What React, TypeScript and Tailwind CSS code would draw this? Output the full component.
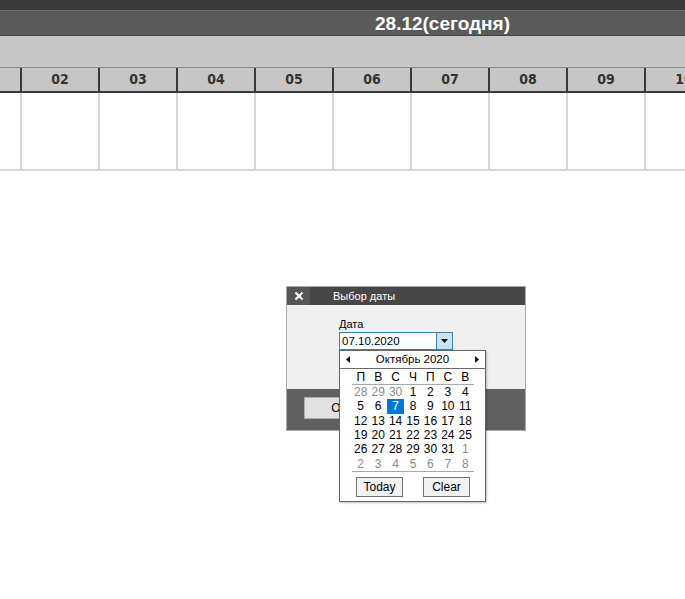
import React from "react";

const cols = ["02", "03", "04", "05", "06", "07", "08", "09", "10"];

type D = { n: number; grey?: boolean; sel?: boolean };
const rows: D[][] = [
  [{ n: 28, grey: true }, { n: 29, grey: true }, { n: 30, grey: true }, { n: 1 }, { n: 2 }, { n: 3 }, { n: 4 }],
  [{ n: 5 }, { n: 6 }, { n: 7, sel: true }, { n: 8 }, { n: 9 }, { n: 10 }, { n: 11 }],
  [{ n: 12 }, { n: 13 }, { n: 14 }, { n: 15 }, { n: 16 }, { n: 17 }, { n: 18 }],
  [{ n: 19 }, { n: 20 }, { n: 21 }, { n: 22 }, { n: 23 }, { n: 24 }, { n: 25 }],
  [{ n: 26 }, { n: 27 }, { n: 28 }, { n: 29 }, { n: 30 }, { n: 31 }, { n: 1, grey: true }],
  [2, 3, 4, 5, 6, 7, 8].map((n) => ({ n, grey: true })),
];

const dayNames = ["П", "В", "С", "Ч", "П", "С", "В"];

export default function App() {
  return (
    <div className="relative w-[685px] h-[599px] overflow-hidden bg-white font-['Liberation_Sans',sans-serif]">
      {/* top bands */}
      <div className="h-[10px] bg-[#3a3a3a]" />
      <div className="h-[26px] bg-[#5a5a5a] border-t border-t-[#6e6e6e] border-b border-b-[#444444] flex items-center pl-[375px]">
        <span className="text-white font-bold text-[19px] leading-none">28.12(сегодня)</span>
      </div>
      <div className="h-[31px] bg-[#c6c6c6]" />
      {/* header row */}
      <div className="flex h-[26px] bg-[#c6c6c6] border-t border-t-[#8c8c8c] border-b-2 border-b-[#3a3a3a] overflow-hidden">
        <div className="w-[20px] shrink-0" />
        {cols.map((c) => (
          <div
            key={c}
            className="w-[78px] shrink-0 border-l-2 border-l-[#3a3a3a] flex items-center justify-center font-['Liberation_Sans_Narrow','DejaVu_Sans',sans-serif] font-stretch-condensed font-bold text-[14px] text-[#333333]"
          >
            {c}
          </div>
        ))}
      </div>
      {/* body row */}
      <div className="flex h-[78px] border-b-2 border-b-[#d6d6d6] overflow-hidden">
        <div className="w-[20px] shrink-0" />
        {cols.map((c) => (
          <div key={c} className="w-[78px] shrink-0 border-l-2 border-l-[#d6d6d6]" />
        ))}
      </div>

      {/* dialog */}
      <div className="absolute left-[286px] top-[286px] w-[240px] h-[145px] border border-[#a8a8a8] flex flex-col">
        <div className="h-[18px] bg-[#474747] flex items-center shrink-0">
          <div className="w-[23px] h-full bg-[#565656] flex items-center justify-center">
            <svg width="10" height="10" viewBox="0 0 10 10">
              <path d="M1.5 1.5 L8.5 8.5 M8.5 1.5 L1.5 8.5" stroke="white" strokeWidth="2" />
            </svg>
          </div>
          <span className="ml-[23px] text-white text-[11px] leading-none">Выбор даты</span>
        </div>
        <div className="h-[84px] bg-[#f0f0f0] pl-[52px] pt-[12px] shrink-0">
          <div className="text-[11px] leading-[14px] text-black">Дата</div>
          <div className="mt-[1px] w-[114px] h-[18px] border border-[#3c7fb1] bg-white flex">
            <div className="flex-1 pl-[2px] text-[11.5px] leading-[16px] text-black">07.10.2020</div>
            <div className="w-[16px] h-full bg-[#c9e2f6] border-l border-l-[#3c7fb1] flex items-center justify-center">
              <svg width="7" height="4" viewBox="0 0 7 4">
                <path d="M0 0 H7 L3.5 4 Z" fill="#111" />
              </svg>
            </div>
          </div>
        </div>
        <div className="flex-1 bg-[#606060] pl-[17px] pt-[8px]">
          <div className="w-[72px] h-[22px] bg-[#e1e1e1] border border-[#adadad] flex items-center justify-center text-[12px] text-black">
            OK
          </div>
        </div>
      </div>

      {/* calendar popup */}
      <div className="absolute left-[339px] top-[350px] w-[147px] h-[152px] bg-white border border-[#646464] flex flex-col items-center shadow-[1px_1px_2px_rgba(0,0,0,0.25)]">
        <div className="w-full h-[18px] border-b border-b-[#6a6a6a] flex items-center justify-between px-[6px] shrink-0">
          <svg width="4" height="7" viewBox="0 0 4 7">
            <path d="M4 0 V7 L0 3.5 Z" fill="#111" />
          </svg>
          <span className="text-[11.5px] leading-none text-black">Октябрь 2020</span>
          <svg width="4" height="7" viewBox="0 0 4 7">
            <path d="M0 0 V7 L4 3.5 Z" fill="#111" />
          </svg>
        </div>
        <div className="w-[122px] ml-[1px] h-[16px] border-b border-b-[#a8a8a8] grid grid-cols-7 shrink-0">
          {dayNames.map((d, i) => (
            <div key={i} className="flex items-center justify-center text-[12px] leading-none text-black">
              {d}
            </div>
          ))}
        </div>
        <div className="w-[122px] ml-[1px] h-[86px] grid grid-cols-7 grid-rows-6 shrink-0">
          {rows.flat().map((d, i) => (
            <div
              key={i}
              className={
                d.sel
                  ? "flex items-center justify-center text-[12px] leading-none bg-[#0078d7] text-white"
                  : d.grey
                  ? "flex items-center justify-center text-[12px] leading-none text-[#8a8a8a]"
                  : "flex items-center justify-center text-[12px] leading-none text-black"
              }
            >
              {d.n}
            </div>
          ))}
        </div>
        <div className="w-[122px] ml-[1px] border-t border-t-[#a8a8a8] pt-[5px] flex justify-between px-[4px] shrink-0">
          <div className="w-[47px] h-[20px] border border-[#707070] bg-[#f2f2f2] flex items-center justify-center text-[12px] text-black">
            Today
          </div>
          <div className="w-[47px] h-[20px] border border-[#707070] bg-[#f2f2f2] flex items-center justify-center text-[12px] text-black">
            Clear
          </div>
        </div>
      </div>
    </div>
  );
}
